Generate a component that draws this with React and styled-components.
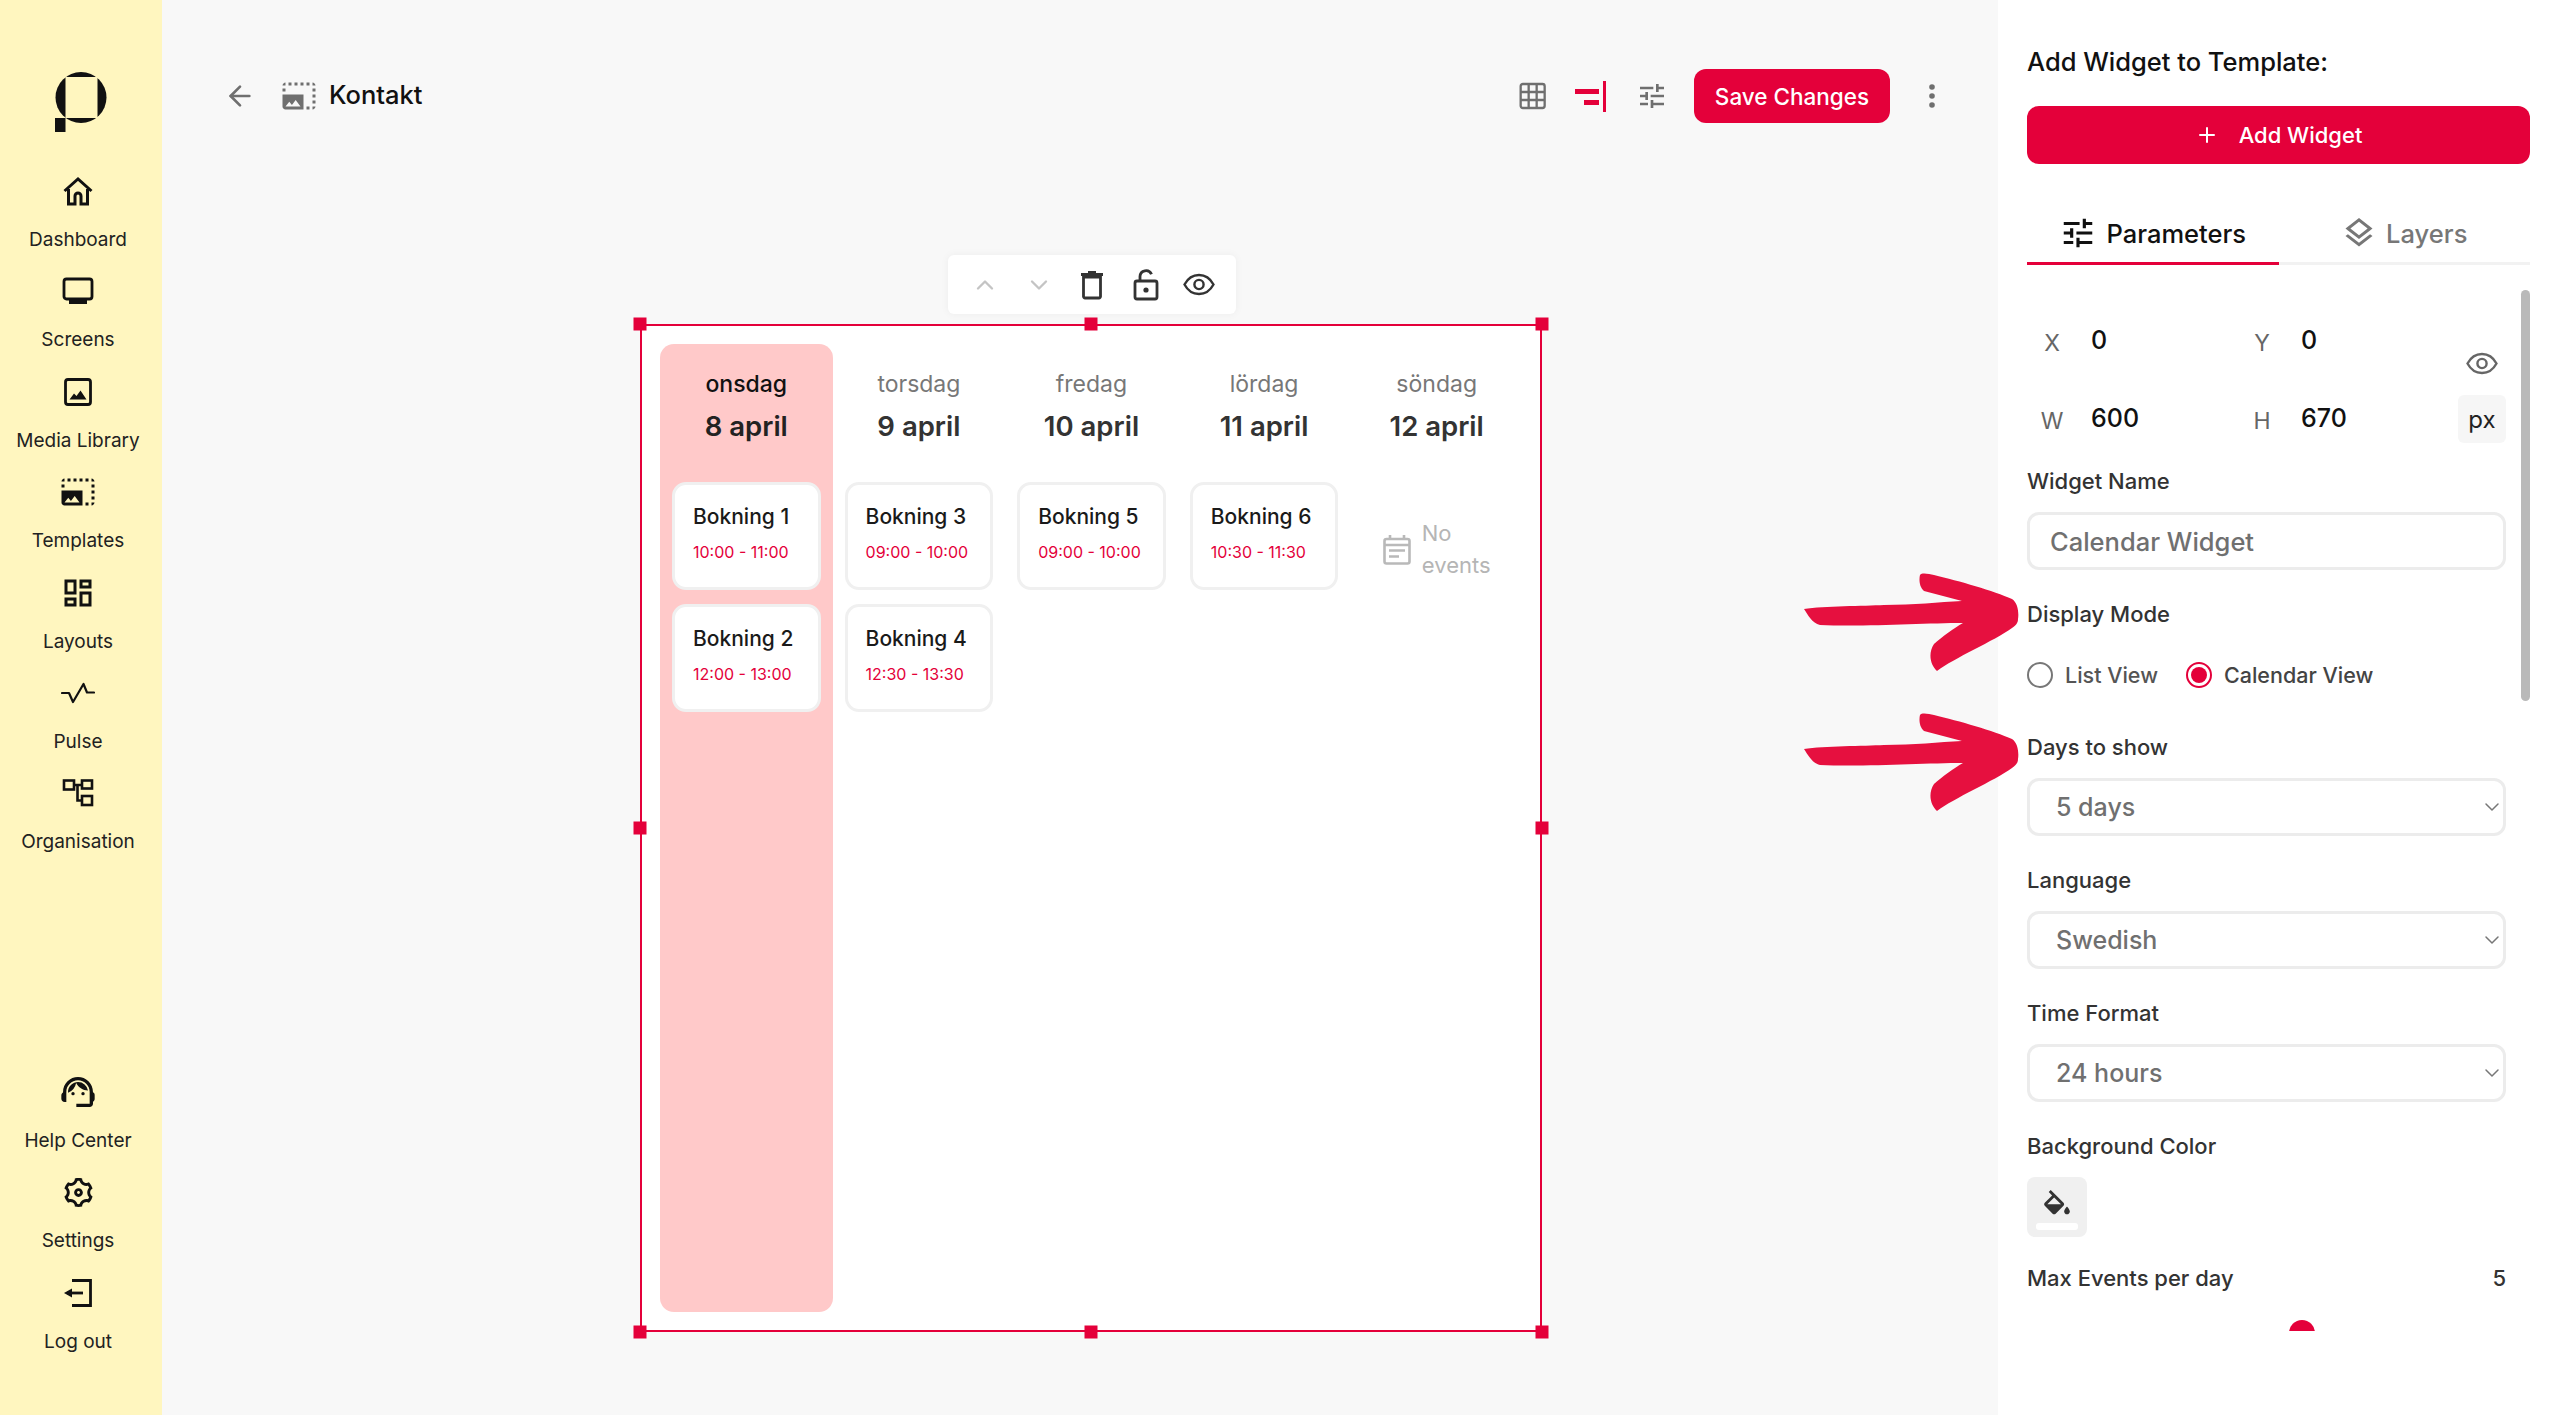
import React from 'react'
import styled, { createGlobalStyle } from 'styled-components'
import { ChevronUp, ChevronDown, Plus, ArrowLeft } from 'lucide-react'
import {
  MdPhotoSizeSelectLarge,
  MdOutlineDashboard,
  MdOutlineSupportAgent,
  MdTune,
  MdOutlineLayers,
} from 'react-icons/md'
import { RiSettings3Line } from 'react-icons/ri'

const RED = '#e4003a'

const GlobalStyle = createGlobalStyle`
  html, body { margin: 0; padding: 0; height: 100%; }
  body { font-family: Inter, "Open Sans", sans-serif; color: #111; background: #f8f8f8; }
  * { box-sizing: border-box; }
`

/* ---------- drawn icons ---------- */

const Logo = () => (
  <svg width="52" height="60" viewBox="0 0 52 60">
    <circle cx="26" cy="25.5" r="25.5" fill="#111" />
    <rect x="10.5" y="5" width="32" height="41" fill="#fff6bf" />
    <rect x="0" y="46" width="10.5" height="14" fill="#111" />
  </svg>
)

const HomeIcon = () => (
  <svg width="32" height="32" viewBox="0 0 32 32" fill="none" stroke="#111" strokeWidth="3">
    <path d="M2.5 16 16 4l13.5 12" />
    <path d="M6.5 14v15h6.5v-8a3 3 0 0 1 6 0v8h6.5V14" />
  </svg>
)

const ScreenIcon = () => (
  <svg width="32" height="32" viewBox="0 0 32 32" fill="none">
    <rect x="2" y="4" width="28" height="20" rx="2.5" stroke="#111" strokeWidth="2.8" />
    <rect x="7" y="24.5" width="18" height="4.5" fill="#111" />
  </svg>
)

const MediaIcon = () => (
  <svg width="32" height="32" viewBox="0 0 32 32" fill="none">
    <rect x="3.5" y="3.5" width="25" height="25" rx="2.5" stroke="#111" strokeWidth="2.8" />
    <path d="M7.5 23.5 12 17.5l2.5 2.5 4-5.5 6 9z" fill="#111" />
  </svg>
)

const PulseIcon = () => (
  <svg width="34" height="32" viewBox="0 0 34 32" fill="none" stroke="#111" strokeWidth="2.2" strokeLinejoin="round" strokeLinecap="round">
    <path d="M1 16H8L12 25 22.5 7 26 15.5H33" />
  </svg>
)

const OrgIcon = () => (
  <svg width="32" height="32" viewBox="0 0 32 32" fill="none" stroke="#111" strokeWidth="2.6">
    <rect x="2" y="3.5" width="10" height="9" />
    <rect x="20" y="3.5" width="10" height="8" />
    <rect x="20" y="19" width="10" height="9" />
    <path d="M12 8h8M15.5 8v15.5H20" />
  </svg>
)

const LogoutIcon = () => (
  <svg width="32" height="32" viewBox="0 0 32 32" fill="none" stroke="#111" strokeWidth="2.8">
    <path d="M10 3.5h18.5v25H10" />
    <path d="M21 16H5" />
    <path d="M2 16l8-4.5v9z" fill="#111" stroke="none" />
  </svg>
)

const GridIcon = () => (
  <svg width="36" height="30" viewBox="-6 0 36 30" fill="none" stroke="#6f6f6f" strokeWidth="2.6">
    <rect x="1.5" y="1.5" width="27" height="27" rx="2.5" />
    <path d="M10.5 1.5v27M19.5 1.5v27M1.5 10.5h27M1.5 19.5h27" />
  </svg>
)

const AlignIcon = () => (
  <svg width="32" height="32" viewBox="0 0 32 32" fill={RED}>
    <rect x="28" y="1" width="3" height="31" />
    <rect x="0" y="9" width="24" height="5" />
    <rect x="9" y="20" width="15" height="5" />
  </svg>
)

const DotsIcon = () => (
  <svg width="10" height="26" viewBox="0 0 10 26" fill="#6f6f6f">
    <circle cx="5" cy="4" r="2.8" />
    <circle cx="5" cy="13" r="2.8" />
    <circle cx="5" cy="22" r="2.8" />
  </svg>
)

const TrashIcon = () => (
  <svg width="24" height="30" viewBox="0 0 24 30" fill="none" stroke="#333" strokeWidth="2.8">
    <path d="M3.5 7v19.5a1.5 1.5 0 0 0 1.5 1.5h14a1.5 1.5 0 0 0 1.5-1.5V7z" />
    <path d="M1 4.5h22M8 2.5h8" />
  </svg>
)

const LockIcon = () => (
  <svg width="26" height="32" viewBox="0 0 26 32" fill="none" stroke="#333" strokeWidth="2.8">
    <rect x="2" y="12" width="22" height="18" rx="2" />
    <path d="M7 12V7.5a6 6 0 0 1 11.5-2.2" />
    <circle cx="13" cy="21" r="2.6" fill="#333" stroke="none" />
  </svg>
)

const EyeIcon = ({ color = '#333', size = 32 }) => (
  <svg width={size} height={size * 0.72} viewBox="0 0 32 23" fill="none" stroke={color} strokeWidth="2.4">
    <path d="M1.5 11.5C5 5 10 2 16 2s11 3 14.5 9.5C27 18 22 21 16 21S5 18 1.5 11.5z" />
    <circle cx="16" cy="11.5" r="4.6" />
  </svg>
)

const CalendarIcon = () => (
  <svg width="28" height="31" viewBox="0 0 28 31" fill="none" stroke="#b9b9b9" strokeWidth="2.6">
    <rect x="1.5" y="5" width="25" height="24.5" rx="2" />
    <path d="M7 1v5M21 1v5M1.5 11h25" />
    <path d="M6 16.5h16M6 22.5h10" />
  </svg>
)

const BucketIcon = () => (
  <svg width="26" height="25" viewBox="3 0 18 17.5" fill="#333">
    <path d="M16.56 8.94L7.62 0 6.21 1.41l2.38 2.38-5.15 5.15c-.59.59-.59 1.54 0 2.12l5.5 5.5c.29.29.68.44 1.06.44s.77-.15 1.06-.44l5.5-5.5c.59-.58.59-1.53 0-2.12zM5.21 10L10 5.21 14.79 10H5.21zM19 11.5s-2 2.17-2 3.5c0 1.1.9 2 2 2s2-.9 2-2c0-1.33-2-3.5-2-3.5z" />
  </svg>
)

const HandArrow = () => (
  <svg width="215" height="99" viewBox="0 0 215 99">
    <path
      fill="#e6103f"
      d="M0 36C20 33 60 33 80 32C110 32 135 29 158 28L120 18C115 14 115 6 116 2C118-1 125 1 130 2C155 8 190 18 208 26C214 30 215 40 214 46C214 50 212 52 208 55C190 68 150 85 133 98C126 92 124 80 130 71C138 64 150 55 159 50C120 50 60 54 16 52C8 50 4 42 0 36Z"
    />
  </svg>
)

/* ---------- page shell ---------- */

const Page = styled.div`
  position: relative;
  display: flex;
  width: 100%;
  height: 100vh;
  overflow: hidden;
`

const Sidebar = styled.nav`
  flex: 0 0 162px;
  display: flex;
  flex-direction: column;
  padding: 72px 0 41px;
  background: #fff6bf;
`

const LogoBox = styled.div`
  display: flex;
  justify-content: center;
  height: 60px;
  margin-bottom: 40px;
`

const NavGroup = styled.div`
  display: flex;
  flex-direction: column;
  padding-right: 6px;
  margin-top: ${p => (p.$bottom ? 'auto' : '0')};
`

const NavItem = styled.div`
  display: flex;
  flex-direction: column;
  align-items: center;
  height: 100.4px;
  padding-top: 3px;
`

const NavIcon = styled.div`
  display: flex;
  align-items: center;
  justify-content: center;
  height: 32px;
  color: #111;
`

const NavLabel = styled.div`
  margin-top: 21px;
  font-size: 19px;
  line-height: 24px;
  color: #222;
`

const Main = styled.main`
  flex: 1;
  display: flex;
  flex-direction: column;
  background: #f8f8f8;
`

/* ---------- top bar ---------- */

const TopBar = styled.header`
  display: flex;
  align-items: center;
  height: 192px;
  padding: 0 61px 0 62px;
`

const BackBtn = styled.div`
  display: flex;
  color: #6f6f6f;
  margin-right: 25px;
`

const PageIcon = styled.div`
  display: flex;
  color: #6f6f6f;
  margin-right: 12px;
`

const PageTitle = styled.h1`
  margin: 0;
  font-size: 25.5px;
  line-height: 32px;
  padding-bottom: 2px;
  font-weight: 500;
  color: #111;
`

const TopActions = styled.div`
  display: flex;
  align-items: center;
  margin-left: auto;
`

const TopIcon = styled.div`
  display: flex;
  justify-content: center;
  width: 32px;
  margin-right: 29px;
  color: #6f6f6f;
`

const SaveBtn = styled.button`
  width: 196px;
  height: 54px;
  margin-left: -3px;
  margin-right: 37px;
  border: 0;
  border-radius: 12px;
  background: ${RED};
  color: #fff;
  font: 500 22.5px Inter, sans-serif;
`

/* ---------- canvas ---------- */

const FloatBar = styled.div`
  display: flex;
  align-items: center;
  justify-content: space-between;
  width: 288px;
  height: 59px;
  margin: 63px 0 10px 786px;
  padding: 0 21px;
  background: #fff;
  border-radius: 6px;
  box-shadow: 0 0 8px rgba(0, 0, 0, 0.05);
`

const FloatIcon = styled.div`
  display: flex;
  justify-content: center;
  width: 32px;
  color: #c4c4c4;
`

const Frame = styled.div`
  position: relative;
  width: 902px;
  height: 1008px;
  margin-left: 478px;
  border: 2px solid ${RED};
  background: #fff;
  padding: 18px;
`

const Handle = styled.span`
  position: absolute;
  width: 13px;
  height: 13px;
  background: ${RED};
  left: calc(${p => p.$x}% + ${p => (p.$x - 50) / 25}px);
  top: calc(${p => p.$y}% + ${p => (p.$y - 50) / 25}px);
  transform: translate(-50%, -50%);
`

const Week = styled.div`
  display: grid;
  grid-template-columns: repeat(5, 172.6px);
  height: 100%;
`

const Day = styled.div`
  display: flex;
  flex-direction: column;
  align-items: center;
  padding: 26px 12px 0;
  border-radius: 14px;
  background: ${p => (p.$today ? '#ffc9c9' : 'transparent')};
`

const DayName = styled.div`
  font-size: 23px;
  line-height: 28px;
  font-weight: ${p => (p.$today ? 500 : 400)};
  color: ${p => (p.$today ? '#111' : '#777')};
`

const DayDate = styled.div`
  margin: 12px 0 40px;
  font-size: 27.5px;
  line-height: 32px;
  font-weight: 600;
  color: ${p => (p.$today ? '#222' : '#333')};
`

const EventList = styled.div`
  display: flex;
  flex-direction: column;
  gap: 14px;
  width: 100%;
`

const Event = styled.div`
  height: 108px;
  padding: 19px 0 0 18px;
  background: #fff;
  border: 3px solid #f0f0f0;
  border-radius: 14px;
`

const EventTitle = styled.div`
  font-size: 21px;
  line-height: 26px;
  font-weight: 500;
  color: #1a1a1a;
`

const EventTime = styled.div`
  margin-top: 11px;
  font-size: 16px;
  line-height: 22px;
  color: ${RED};
`

const NoEvents = styled.div`
  display: flex;
  align-items: center;
  justify-content: center;
  gap: 11px;
  height: 108px;
  margin-top: 13px;
  font-size: 22px;
  line-height: 32px;
  color: #b5b5b5;
`

/* ---------- right panel ---------- */

const Panel = styled.aside`
  flex: 0 0 562px;
  padding: 47px 30px 0 29px;
  background: #fff;
`

const PanelTitle = styled.h2`
  margin: 0;
  font-size: 25.5px;
  line-height: 30px;
  font-weight: 500;
  color: #111;
`

const AddBtn = styled.button`
  display: flex;
  align-items: center;
  justify-content: center;
  gap: 20px;
  width: 100%;
  height: 58px;
  margin-top: 29px;
  border: 0;
  border-radius: 12px;
  background: ${RED};
  color: #fff;
  font: 500 22px Inter, sans-serif;
`

const Tabs = styled.div`
  display: flex;
  height: 61px;
  margin-top: 40px;
`

const Tab = styled.div`
  flex: 1;
  display: flex;
  align-items: center;
  justify-content: center;
  gap: 9px;
  font-size: 25.5px;
  font-weight: 500;
  color: ${p => (p.$active ? '#111' : '#777')};
  border-bottom: 3px solid ${p => (p.$active ? RED : '#f2f2f2')};
`

const Scroll = styled.div`
  position: relative;
  height: 1066px;
  padding-top: 50px;
  overflow: hidden;
`

const ScrollThumb = styled.div`
  position: absolute;
  top: 25px;
  right: 0;
  width: 9px;
  height: 411px;
  border-radius: 5px;
  background: #b9b9b9;
`

const Dims = styled.div`
  display: flex;
  height: 128px;
`

const DimGrid = styled.div`
  display: grid;
  grid-template-columns: 210px 210px;
  grid-template-rows: 50px 50px;
  row-gap: 28px;
`

const Dim = styled.div`
  display: flex;
  align-items: center;
`

const DimKey = styled.span`
  width: 50px;
  text-align: center;
  font-size: 23px;
  padding-top: 5px;
  color: #666;
`

const DimValue = styled.span`
  margin-left: 14px;
  font-size: 25px;
  font-weight: 500;
  color: #111;
`

const DimSide = styled.div`
  display: flex;
  flex-direction: column;
  justify-content: flex-end;
  align-items: center;
  width: 48px;
  margin-left: 11px;
`

const PxBox = styled.div`
  display: flex;
  align-items: center;
  justify-content: center;
  width: 48px;
  height: 48px;
  margin-top: 20px;
  border-radius: 6px;
  background: #f6f6f6;
  font-size: 24px;
  color: #222;
`

const Field = styled.div`
  width: 479px;
  margin-top: ${p => p.$top || 31}px;
`

const Label = styled.div`
  display: flex;
  justify-content: space-between;
  font-size: 22px;
  line-height: 26px;
  font-weight: 500;
  color: #333;
`

const TextBox = styled.div`
  display: flex;
  align-items: center;
  position: relative;
  height: 58px;
  margin-top: 18px;
  padding-left: ${p => (p.$select ? '26px' : '20px')};
  border: 3px solid #ececec;
  border-radius: 12px;
  background: #fff;
  font-size: ${p => (p.$select ? '25px' : '25.5px')};
  font-weight: 500;
  color: #707070;
`

const SelectCaret = styled.span`
  display: flex;
  position: absolute;
  right: -1px;
  color: #777;
`

const RadioRow = styled.div`
  display: flex;
  align-items: center;
  height: 26px;
  margin-top: 35px;
`

const RadioItem = styled.div`
  display: flex;
  align-items: center;
  margin-right: 28px;
  font-size: 21.5px;
  font-weight: 500;
  color: ${p => (p.$on ? '#444' : '#555')};
`

const RadioDot = styled.span`
  display: flex;
  align-items: center;
  justify-content: center;
  width: 26px;
  height: 26px;
  margin-right: 12px;
  border-radius: 50%;
  border: 2px solid ${p => (p.$on ? RED : '#777')};
  &::after {
    content: '';
    width: 16px;
    height: 16px;
    border-radius: 50%;
    background: ${p => (p.$on ? RED : 'transparent')};
  }
`

const Swatch = styled.div`
  display: flex;
  flex-direction: column;
  align-items: center;
  width: 60px;
  height: 60px;
  margin-top: 18px;
  padding-top: 13px;
  border-radius: 8px;
  background: #f0f0f0;
`

const SwatchBar = styled.span`
  width: 42px;
  height: 7px;
  margin-top: 8px;
  border-radius: 3px;
  background: #fff;
`

const SliderKnob = styled.div`
  width: 26px;
  height: 26px;
  margin: 29px 0 0 262px;
  border-radius: 50%;
  background: ${RED};
`

const ArrowMark = styled.div`
  position: absolute;
  display: flex;
  left: 1804px;
  top: ${p => p.$top}px;
`

const nav = [
  ['Dashboard', <HomeIcon />],
  ['Screens', <ScreenIcon />],
  ['Media Library', <MediaIcon />],
  ['Templates', <MdPhotoSizeSelectLarge size={36} />],
  ['Layouts', <MdOutlineDashboard size={36} />],
  ['Pulse', <PulseIcon />],
  ['Organisation', <OrgIcon />],
]

const navBottom = [
  ['Help Center', <MdOutlineSupportAgent size={40} />],
  ['Settings', <RiSettings3Line size={35} />],
  ['Log out', <LogoutIcon />],
]

const days = [
  { name: 'onsdag', date: '8 april', today: true, events: [['Bokning 1', '10:00 - 11:00'], ['Bokning 2', '12:00 - 13:00']] },
  { name: 'torsdag', date: '9 april', events: [['Bokning 3', '09:00 - 10:00'], ['Bokning 4', '12:30 - 13:30']] },
  { name: 'fredag', date: '10 april', events: [['Bokning 5', '09:00 - 10:00']] },
  { name: 'lördag', date: '11 april', events: [['Bokning 6', '10:30 - 11:30']] },
  { name: 'söndag', date: '12 april', events: [] },
]

const handles = [
  [0, 0], [50, 0], [100, 0],
  [0, 50], [100, 50],
  [0, 100], [50, 100], [100, 100],
]

function NavEntry({ label, icon }) {
  return (
    <NavItem>
      <NavIcon>{icon}</NavIcon>
      <NavLabel>{label}</NavLabel>
    </NavItem>
  )
}

function SelectField({ label, value, top }) {
  return (
    <Field $top={top}>
      <Label>{label}</Label>
      <TextBox $select>
        {value}
        <SelectCaret><ChevronDown size={24} strokeWidth={1.5} /></SelectCaret>
      </TextBox>
    </Field>
  )
}

export default function App() {
  return (
    <>
      <GlobalStyle />
      <Page>
        <Sidebar>
          <LogoBox><Logo /></LogoBox>
          <NavGroup>
            {nav.map(([label, icon]) => <NavEntry key={label} label={label} icon={icon} />)}
          </NavGroup>
          <NavGroup $bottom>
            {navBottom.map(([label, icon]) => <NavEntry key={label} label={label} icon={icon} />)}
          </NavGroup>
        </Sidebar>

        <Main>
          <TopBar>
            <BackBtn><ArrowLeft size={32} strokeWidth={2} /></BackBtn>
            <PageIcon><MdPhotoSizeSelectLarge size={36} /></PageIcon>
            <PageTitle>Kontakt</PageTitle>
            <TopActions>
              <TopIcon><GridIcon /></TopIcon>
              <TopIcon><AlignIcon /></TopIcon>
              <TopIcon><MdTune size={38} /></TopIcon>
              <SaveBtn>Save Changes</SaveBtn>
              <DotsIcon />
            </TopActions>
          </TopBar>

          <FloatBar>
            <FloatIcon><ChevronUp size={28} strokeWidth={2} /></FloatIcon>
            <FloatIcon><ChevronDown size={28} strokeWidth={2} /></FloatIcon>
            <FloatIcon><TrashIcon /></FloatIcon>
            <FloatIcon><LockIcon /></FloatIcon>
            <FloatIcon><EyeIcon /></FloatIcon>
          </FloatBar>

          <Frame>
            {handles.map(([x, y]) => <Handle key={`${x}-${y}`} $x={x} $y={y} />)}
            <Week>
              {days.map(d => (
                <Day key={d.name} $today={d.today}>
                  <DayName $today={d.today}>{d.name}</DayName>
                  <DayDate $today={d.today}>{d.date}</DayDate>
                  <EventList>
                    {d.events.map(([title, time]) => (
                      <Event key={title}>
                        <EventTitle>{title}</EventTitle>
                        <EventTime>{time}</EventTime>
                      </Event>
                    ))}
                    {d.events.length === 0 && (
                      <NoEvents>
                        <CalendarIcon />
                        <span>No<br />events</span>
                      </NoEvents>
                    )}
                  </EventList>
                </Day>
              ))}
            </Week>
          </Frame>
        </Main>

        <Panel>
          <PanelTitle>Add Widget to Template:</PanelTitle>
          <AddBtn><Plus size={24} strokeWidth={2} />Add Widget</AddBtn>
          <Tabs>
            <Tab $active><MdTune size={38} />Parameters</Tab>
            <Tab><MdOutlineLayers size={36} color="#777" />Layers</Tab>
          </Tabs>
          <Scroll>
            <ScrollThumb />
            <Dims>
              <DimGrid>
                <Dim><DimKey>X</DimKey><DimValue>0</DimValue></Dim>
                <Dim><DimKey>Y</DimKey><DimValue>0</DimValue></Dim>
                <Dim><DimKey>W</DimKey><DimValue>600</DimValue></Dim>
                <Dim><DimKey>H</DimKey><DimValue>670</DimValue></Dim>
              </DimGrid>
              <DimSide>
                <EyeIcon color="#666" />
                <PxBox>px</PxBox>
              </DimSide>
            </Dims>

            <Field $top={25}>
              <Label>Widget Name</Label>
              <TextBox>Calendar Widget</TextBox>
            </Field>

            <Field $top={31}>
              <Label>Display Mode</Label>
              <RadioRow>
                <RadioItem><RadioDot />List View</RadioItem>
                <RadioItem $on><RadioDot $on />Calendar View</RadioItem>
              </RadioRow>
            </Field>

            <SelectField top={46} label="Days to show" value="5 days" />
            <SelectField label="Language" value="Swedish" />
            <SelectField label="Time Format" value="24 hours" />

            <Field>
              <Label>Background Color</Label>
              <Swatch>
                <BucketIcon />
                <SwatchBar />
              </Swatch>
            </Field>

            <Field $top={28}>
              <Label>Max Events per day<span>5</span></Label>
            </Field>
            <SliderKnob />
          </Scroll>
        </Panel>

        <ArrowMark $top={573}><HandArrow /></ArrowMark>
        <ArrowMark $top={713}><HandArrow /></ArrowMark>
      </Page>
    </>
  )
}
